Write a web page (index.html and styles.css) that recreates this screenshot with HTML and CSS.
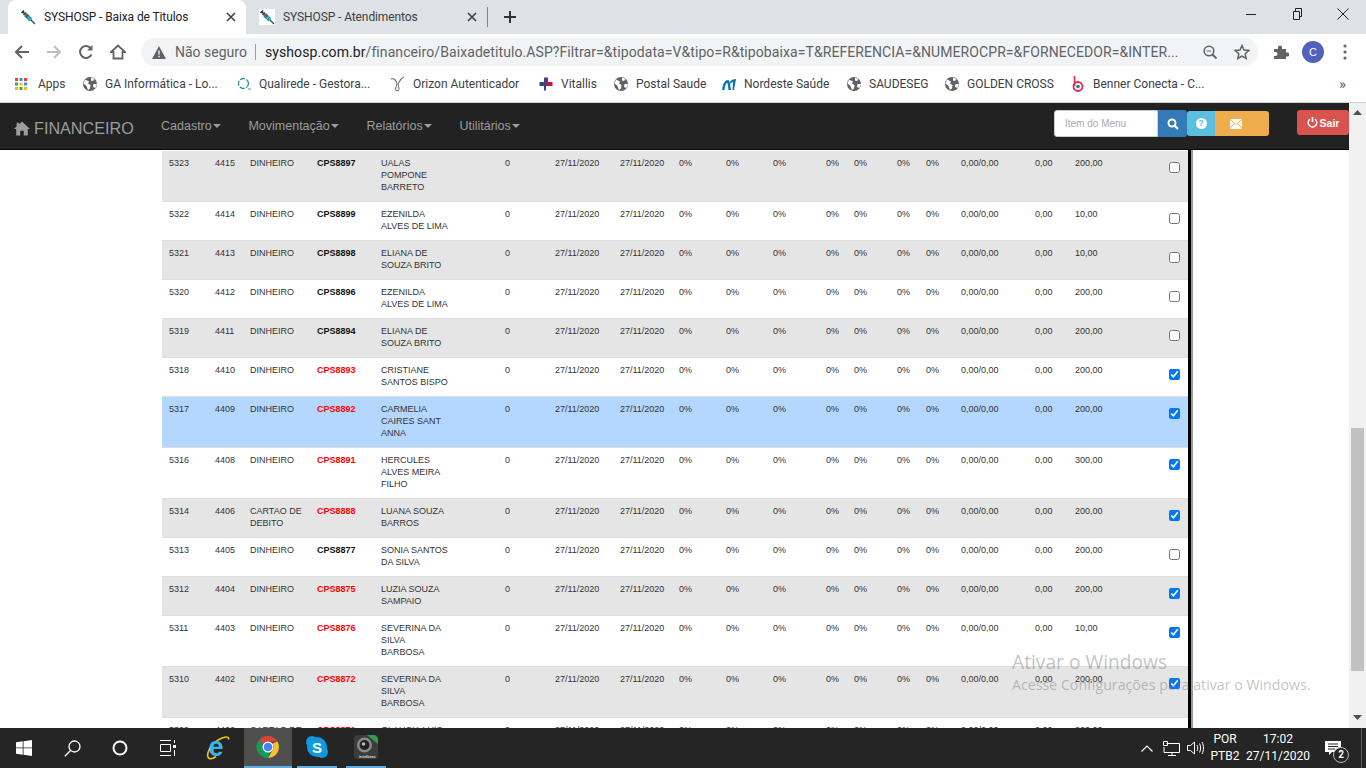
FILE: index.html
```html
<!DOCTYPE html>
<html lang="pt-BR">
<head>
    <meta charset="UTF-8">
    <title>SYSHOSP - Baixa de Titulos</title>
    <link rel="stylesheet" href="styles.css">
</head>
<body>
    <svg class="defs" width="0" height="0">
        <symbol id="globe" viewBox="0 0 16 16">
            <circle cx="8" cy="8" r="7" fill="#5f6368"/>
            <path d="M3 3.500 7 5.500 6 7.500 8.500 9 8 12.500 6 14 4.500 10 1.500 7.500ZM9 1.500 12.500 3 11 5 9 4.500ZM11.500 8 15 8 13.500 12 11 11Z" fill="#fff"/>
        </symbol>
        <symbol id="syringe" viewBox="0 0 16 16">
            <path d="M1.500 4 4 1.500M2.800 2.800 5.500 5.500" stroke="#2d2d2d" stroke-width="1.500" fill="none"/>
            <path d="M6 3.500 3.500 6" stroke="#444" stroke-width="1.500"/>
            <path d="M5.500 5.500 10.800 10.800" stroke="#3c6d7a" stroke-width="4"/>
            <path d="M8 8 10.800 10.800" stroke="#27b3c9" stroke-width="3"/>
            <path d="M10.800 10.800 15 15" stroke="#2f4f4f" stroke-width="1.300"/>
        </symbol>
    </svg>

    <!-- TABS -->
    <div class="tabbar">
        <div class="tab tab-active">
            <svg class="favicon"><use href="#syringe"/></svg>
            <span class="tab-title">SYSHOSP - Baixa de Titulos</span>
            <svg class="tab-close" viewBox="0 0 10 10"><path d="M1 1 9 9M9 1 1 9" stroke="#3c4043" stroke-width="1.600"/></svg>
        </div>
        <div class="tab">
            <svg class="favicon favicon-boxed"><use href="#syringe"/></svg>
            <span class="tab-title">SYSHOSP - Atendimentos</span>
            <svg class="tab-close" viewBox="0 0 10 10"><path d="M1 1 9 9M9 1 1 9" stroke="#3c4043" stroke-width="1.600"/></svg>
        </div>
        <span class="tab-sep"></span>
        <svg class="tab-new" width="12" height="12" viewBox="0 0 12 12"><path d="M6 0V12M0 6H12" stroke="#333" stroke-width="2"/></svg>
        <div class="win-controls">
            <svg width="12" height="12" viewBox="0 0 12 12"><path d="M1 6.500H11" stroke="#222"/></svg>
            <svg width="12" height="12" viewBox="0 0 12 12"><path d="M2.500 3.500H8.500V11.500H2.500ZM4.500 3.500V.5H10.500V8.500H8.500" fill="none" stroke="#222"/></svg>
            <svg width="12" height="12" viewBox="0 0 12 12"><path d="M.5 .5 11.500 11.500M11.500 .5 .5 11.500" stroke="#222"/></svg>
        </div>
    </div>

    <!-- ADDRESS BAR -->
    <div class="toolbar">
        <svg class="nav-icon" viewBox="0 0 16 16"><path d="M15 8H2M8 2 2 8 8 14" fill="none" stroke="#5f6368" stroke-width="2"/></svg>
        <svg class="nav-icon" viewBox="0 0 16 16"><path d="M1 8H14M8 2 14 8 8 14" fill="none" stroke="#bdc1c6" stroke-width="2"/></svg>
        <svg class="nav-icon" viewBox="0 0 16 16"><path d="M13.500 10.500A6 6 0 1 1 13 4.500" fill="none" stroke="#5f6368" stroke-width="2"/><path d="M14.500 1V6.500H9Z" fill="#5f6368"/></svg>
        <svg class="nav-icon" viewBox="0 0 16 16"><path d="M8 1.500 1 8H3.500V14.500H12.500V8H15Z" fill="none" stroke="#5f6368" stroke-width="1.800"/></svg>
        <div class="omnibox">
            <svg class="warn" width="14" height="13" viewBox="0 0 14 13"><path d="M7 0 14 13H0Z" fill="#5f6368"/><path d="M7 4.500V8.500M7 9.800V11.300" stroke="#f1f3f4" stroke-width="1.400"/></svg>
            <span class="not-secure">Não seguro</span>
            <span class="omni-sep"></span>
            <span class="url"><b>syshosp.com.br</b>/financeiro/Baixadetitulo.ASP?Filtrar=&amp;tipodata=V&amp;tipo=R&amp;tipobaixa=T&amp;REFERENCIA=&amp;NUMEROCPR=&amp;FORNECEDOR=&amp;INTER...</span>
            <svg class="omni-icon" viewBox="0 0 16 16"><circle cx="7" cy="7" r="4.800" fill="none" stroke="#5f6368" stroke-width="1.500"/><path d="M10.500 10.500 14.500 14.500" stroke="#5f6368" stroke-width="1.800"/><path d="M4.800 7H9.200" stroke="#5f6368"/></svg>
            <svg class="omni-icon omni-star" viewBox="0 0 16 16"><path d="M8 1.500 10 6 14.800 6.500 11.200 9.800 12.200 14.500 8 12 3.800 14.500 4.800 9.800 1.200 6.500 6 6Z" fill="none" stroke="#5f6368" stroke-width="1.500"/></svg>
        </div>
        <svg class="ext-icon" viewBox="0 0 16 16"><path d="M1 5H5V3.500A2 2 0 0 1 9 3.500V5H13V8.500H14.500A2 2 0 0 1 14.500 12.500H13V15H1V12H2.500A2 2 0 0 0 2.500 8H1Z" fill="#5f6368"/></svg>
        <span class="avatar">C</span>
        <svg class="kebab" width="4" height="16" viewBox="0 0 4 16"><circle cx="2" cy="2" r="1.600" fill="#5f6368"/><circle cx="2" cy="8" r="1.600" fill="#5f6368"/><circle cx="2" cy="14" r="1.600" fill="#5f6368"/></svg>
    </div>

    <!-- BOOKMARKS -->
    <div class="bookmarks">
        <div class="bm">
            <svg class="bm-icon bm-apps" viewBox="0 0 12 12">
                <path d="M0 0H3V3H0Z" fill="#ea4335"/><path d="M4.500 0H7.500V3H4.500Z" fill="#4285f4"/><path d="M9 0H12V3H9Z" fill="#ea4335"/>
                <path d="M0 4.500H3V7.500H0Z" fill="#34a853"/><path d="M4.500 4.500H7.500V7.500H4.500Z" fill="#fbbc05"/><path d="M9 4.500H12V7.500H9Z" fill="#4285f4"/>
                <path d="M0 9H3V12H0Z" fill="#fbbc05"/><path d="M4.500 9H7.500V12H4.500Z" fill="#34a853"/><path d="M9 9H12V12H9Z" fill="#fbbc05"/>
            </svg>Apps
        </div>
        <div class="bm"><svg class="bm-icon"><use href="#globe"/></svg>GA Informática - Lo...</div>
        <div class="bm">
            <svg class="bm-icon" viewBox="0 0 16 16"><circle cx="7.500" cy="7.500" r="5" fill="none" stroke="#2f8f9d" stroke-width="1.300" stroke-dasharray="5 1.500"/><path d="M12 13H15" stroke="#3a9a6c"/></svg>Qualirede - Gestora...
        </div>
        <div class="bm">
            <svg class="bm-icon" viewBox="0 0 16 16"><path d="M1 3C3 2 5 3 6.500 6 8 9 6 11 5.500 13 5.500 15.500 9 15.500 9 13 9 10 7 9 9 6 10 4 12 2 14 .8" fill="none" stroke="#777" stroke-width="1.100"/></svg>Orizon Autenticador
        </div>
        <div class="bm">
            <svg class="bm-icon" viewBox="0 0 16 16"><path d="M6 1.500H8V14.500H6V10H1.500V6H6Z" fill="#1f4f8f"/><path d="M8 1.500H10V6H14.500V10H8Z" fill="#b01c4a"/></svg>Vitallis
        </div>
        <div class="bm"><svg class="bm-icon"><use href="#globe"/></svg>Postal Saude</div>
        <div class="bm">
            <svg class="bm-icon" viewBox="0 0 16 16"><path d="M1 14C2 7 4 4 7 4 9 4 9 8 10 14H7.500C7 10 7 7 6 7 5 7 4 10 3.500 14ZM9 6C10 4 12 3 15 3L13 14H11.500L12 6C11 6 10 7 9.500 8Z" fill="#0a74b5"/></svg>Nordeste Saúde
        </div>
        <div class="bm"><svg class="bm-icon"><use href="#globe"/></svg>SAUDESEG</div>
        <div class="bm"><svg class="bm-icon"><use href="#globe"/></svg>GOLDEN CROSS</div>
        <div class="bm">
            <svg class="bm-icon" viewBox="0 0 16 16"><path d="M4.500 0V10" stroke="#e8294c" stroke-width="1.600"/><circle cx="8" cy="10.500" r="4.500" fill="none" stroke="#e8294c" stroke-width="1.800"/><circle cx="8" cy="10.500" r="1.800" fill="#1d6fb8"/></svg>Benner Conecta - C...
        </div>
        <div class="bm bm-more">»</div>
    </div>

    <!-- PAGE -->
    <div class="page">
        <div class="page-content">
            <nav class="navbar">
                <a class="brand">
                    <svg width="16" height="15" viewBox="0 0 18 16"><path d="M9 0 18 8.500H15.500V16H11V10.500H7V16H2.500V8.500H0L3 5.600V1.500H5.500V3.300Z" fill="#9d9d9d"/></svg>
                    FINANCEIRO
                </a>
                <ul class="menu">
                    <li>Cadastro<i class="caret"></i></li>
                    <li>Movimentação<i class="caret"></i></li>
                    <li>Relatórios<i class="caret"></i></li>
                    <li>Utilitários<i class="caret"></i></li>
                </ul>
                <div class="nav-search">
                    <input class="search-input" type="text" placeholder="Item do Menu">
                    <button class="btn btn-search">
                        <svg width="12" height="12" viewBox="0 0 12 12"><circle cx="5" cy="5" r="3.500" fill="none" stroke="#fff" stroke-width="2"/><path d="M7.500 7.500 11 11" stroke="#fff" stroke-width="2.200"/></svg>
                    </button>
                    <button class="btn btn-help"><span class="help-dot">?</span></button>
                    <button class="btn btn-mail">
                        <svg width="12" height="10" viewBox="0 0 12 10"><path d="M0 0H12V10H0Z" fill="#fff"/><path d="M0 .5 6 5.500 12 .5M0 9.500 4 4.500M12 9.500 8 4.500" fill="none" stroke="#f0ad4e"/></svg>
                    </button>
                </div>
                <button class="btn btn-exit">
                    <svg width="11" height="11" viewBox="0 0 11 11"><path d="M3 2.200A4.300 4.300 0 1 0 8 2.200" fill="none" stroke="#fff" stroke-width="1.500"/><path d="M5.500 0V5" stroke="#fff" stroke-width="1.600"/></svg>
                    Sair
                </button>
            </nav>

            <div class="list-wrap">
                <table class="titles">
                    <colgroup>
                        <col class="c46"><col class="c35"><col class="c67"><col class="c64"><col class="c124"><col class="c50">
                        <col class="c65"><col class="c59"><col class="c47"><col class="c47"><col class="c53"><col class="c28">
                        <col class="c43"><col class="c29"><col class="c35"><col class="c74"><col class="c40"><col class="c101"><col class="c20">
                    </colgroup>
                    <tbody>
                        <tr class="grey"><td>5323</td><td>4415</td><td>DINHEIRO</td><td class="code">CPS8897</td><td class="name">UALAS POMPONE BARRETO</td><td>0</td><td>27/11/2020</td><td>27/11/2020</td><td>0%</td><td>0%</td><td>0%</td><td>0%</td><td>0%</td><td>0%</td><td>0%</td><td>0,00/0,00</td><td>0,00</td><td>200,00</td><td class="check"><input type="checkbox"></td></tr>
                        <tr><td>5322</td><td>4414</td><td>DINHEIRO</td><td class="code">CPS8899</td><td class="name">EZENILDA ALVES DE LIMA</td><td>0</td><td>27/11/2020</td><td>27/11/2020</td><td>0%</td><td>0%</td><td>0%</td><td>0%</td><td>0%</td><td>0%</td><td>0%</td><td>0,00/0,00</td><td>0,00</td><td>10,00</td><td class="check"><input type="checkbox"></td></tr>
                        <tr class="grey"><td>5321</td><td>4413</td><td>DINHEIRO</td><td class="code">CPS8898</td><td class="name">ELIANA DE SOUZA BRITO</td><td>0</td><td>27/11/2020</td><td>27/11/2020</td><td>0%</td><td>0%</td><td>0%</td><td>0%</td><td>0%</td><td>0%</td><td>0%</td><td>0,00/0,00</td><td>0,00</td><td>10,00</td><td class="check"><input type="checkbox"></td></tr>
                        <tr><td>5320</td><td>4412</td><td>DINHEIRO</td><td class="code">CPS8896</td><td class="name">EZENILDA ALVES DE LIMA</td><td>0</td><td>27/11/2020</td><td>27/11/2020</td><td>0%</td><td>0%</td><td>0%</td><td>0%</td><td>0%</td><td>0%</td><td>0%</td><td>0,00/0,00</td><td>0,00</td><td>200,00</td><td class="check"><input type="checkbox"></td></tr>
                        <tr class="grey"><td>5319</td><td>4411</td><td>DINHEIRO</td><td class="code">CPS8894</td><td class="name">ELIANA DE SOUZA BRITO</td><td>0</td><td>27/11/2020</td><td>27/11/2020</td><td>0%</td><td>0%</td><td>0%</td><td>0%</td><td>0%</td><td>0%</td><td>0%</td><td>0,00/0,00</td><td>0,00</td><td>200,00</td><td class="check"><input type="checkbox"></td></tr>
                        <tr><td>5318</td><td>4410</td><td>DINHEIRO</td><td class="code paid">CPS8893</td><td class="name">CRISTIANE SANTOS BISPO</td><td>0</td><td>27/11/2020</td><td>27/11/2020</td><td>0%</td><td>0%</td><td>0%</td><td>0%</td><td>0%</td><td>0%</td><td>0%</td><td>0,00/0,00</td><td>0,00</td><td>200,00</td><td class="check"><input type="checkbox" checked></td></tr>
                        <tr class="picked"><td>5317</td><td>4409</td><td>DINHEIRO</td><td class="code paid">CPS8892</td><td class="name">CARMELIA CAIRES SANT ANNA</td><td>0</td><td>27/11/2020</td><td>27/11/2020</td><td>0%</td><td>0%</td><td>0%</td><td>0%</td><td>0%</td><td>0%</td><td>0%</td><td>0,00/0,00</td><td>0,00</td><td>200,00</td><td class="check"><input type="checkbox" checked></td></tr>
                        <tr><td>5316</td><td>4408</td><td>DINHEIRO</td><td class="code paid">CPS8891</td><td class="name">HERCULES ALVES MEIRA FILHO</td><td>0</td><td>27/11/2020</td><td>27/11/2020</td><td>0%</td><td>0%</td><td>0%</td><td>0%</td><td>0%</td><td>0%</td><td>0%</td><td>0,00/0,00</td><td>0,00</td><td>300,00</td><td class="check"><input type="checkbox" checked></td></tr>
                        <tr class="grey"><td>5314</td><td>4406</td><td>CARTAO DE DEBITO</td><td class="code paid">CPS8888</td><td class="name">LUANA SOUZA BARROS</td><td>0</td><td>27/11/2020</td><td>27/11/2020</td><td>0%</td><td>0%</td><td>0%</td><td>0%</td><td>0%</td><td>0%</td><td>0%</td><td>0,00/0,00</td><td>0,00</td><td>200,00</td><td class="check"><input type="checkbox" checked></td></tr>
                        <tr><td>5313</td><td>4405</td><td>DINHEIRO</td><td class="code">CPS8877</td><td class="name">SONIA SANTOS DA SILVA</td><td>0</td><td>27/11/2020</td><td>27/11/2020</td><td>0%</td><td>0%</td><td>0%</td><td>0%</td><td>0%</td><td>0%</td><td>0%</td><td>0,00/0,00</td><td>0,00</td><td>200,00</td><td class="check"><input type="checkbox"></td></tr>
                        <tr class="grey"><td>5312</td><td>4404</td><td>DINHEIRO</td><td class="code paid">CPS8875</td><td class="name">LUZIA SOUZA SAMPAIO</td><td>0</td><td>27/11/2020</td><td>27/11/2020</td><td>0%</td><td>0%</td><td>0%</td><td>0%</td><td>0%</td><td>0%</td><td>0%</td><td>0,00/0,00</td><td>0,00</td><td>200,00</td><td class="check"><input type="checkbox" checked></td></tr>
                        <tr><td>5311</td><td>4403</td><td>DINHEIRO</td><td class="code paid">CPS8876</td><td class="name">SEVERINA DA SILVA BARBOSA</td><td>0</td><td>27/11/2020</td><td>27/11/2020</td><td>0%</td><td>0%</td><td>0%</td><td>0%</td><td>0%</td><td>0%</td><td>0%</td><td>0,00/0,00</td><td>0,00</td><td>10,00</td><td class="check"><input type="checkbox" checked></td></tr>
                        <tr class="grey"><td>5310</td><td>4402</td><td>DINHEIRO</td><td class="code paid">CPS8872</td><td class="name">SEVERINA DA SILVA BARBOSA</td><td>0</td><td>27/11/2020</td><td>27/11/2020</td><td>0%</td><td>0%</td><td>0%</td><td>0%</td><td>0%</td><td>0%</td><td>0%</td><td>0,00/0,00</td><td>0,00</td><td>200,00</td><td class="check"><input type="checkbox" checked></td></tr>
                        <tr><td>5309</td><td>4400</td><td>CARTAO DE DEBITO</td><td class="code paid">CPS8871</td><td class="name">GLAUCIA LUIS SANTOS</td><td>0</td><td>27/11/2020</td><td>27/11/2020</td><td>0%</td><td>0%</td><td>0%</td><td>0%</td><td>0%</td><td>0%</td><td>0%</td><td>0,00/0,00</td><td>0,00</td><td>200,00</td><td class="check"><input type="checkbox" checked></td></tr>
                    </tbody>
                </table>
            </div>
        </div>

        <div class="scrollbar">
            <svg width="9" height="5" viewBox="0 0 9 5"><path d="M4.500 0 9 5H0Z" fill="#505050"/></svg>
            <div class="scroll-track"><div class="scroll-thumb"></div></div>
            <svg width="9" height="5" viewBox="0 0 9 5"><path d="M0 0H9L4.500 5Z" fill="#505050"/></svg>
        </div>

        <!-- WINDOWS WATERMARK -->
        <div class="activate">
            <div class="activate-title">Ativar o Windows</div>
            <div class="activate-sub">Acesse Configurações para ativar o Windows.</div>
        </div>
    </div>

    <!-- TASKBAR -->
    <div class="taskbar">
        <div class="task-slot">
            <svg width="16" height="16" viewBox="0 0 16 16"><path d="M0 2.300 6.700 1.300V7.500H0ZM7.500 1.200 16 0V7.500H7.500ZM0 8.300H6.700V14.700L0 13.700ZM7.500 8.300H16V16L7.500 14.800Z" fill="#fff"/></svg>
        </div>
        <div class="task-slot">
            <svg width="17" height="17" viewBox="0 0 17 17"><circle cx="10.500" cy="6.500" r="5.500" fill="none" stroke="#fff" stroke-width="1.300"/><path d="M6.500 10.500 .8 16.200" stroke="#fff" stroke-width="1.300"/></svg>
        </div>
        <div class="task-slot">
            <svg width="16" height="16" viewBox="0 0 16 16"><circle cx="8" cy="8" r="6.500" fill="none" stroke="#fff" stroke-width="2"/></svg>
        </div>
        <div class="task-slot">
            <svg width="16" height="16" viewBox="0 0 16 16"><path d="M0 .5H11M0 15.500H11M.5 4.500H10.500V11.500H.5Z" fill="none" stroke="#fff"/><path d="M13 5H16V8H13Z" fill="#fff"/><path d="M14.500 0V3M14.500 10V16" stroke="#fff"/></svg>
        </div>
        <div class="task-app task-ie">
            <svg width="24" height="24" viewBox="0 0 24 24">
                <path d="M2.500 22C-.5 18 5 8 13 3.500 18 .5 23.500 0 22.500 3.500M2.500 22C4.500 23.500 8 22 10 20.500" fill="none" stroke="#f2c316" stroke-width="1.600"/>
                <text class="ie-letter" x="2.500" y="20">e</text>
            </svg>
        </div>
        <div class="task-app task-running task-active">
            <svg width="24" height="24" viewBox="0 0 24 24">
                <path d="M12 1A11 11 0 0 1 21.500 6.500H12A5.500 5.500 0 0 0 7 9.500L3.500 4.500A11 11 0 0 1 12 1Z" fill="#db4437"/>
                <path d="M21.500 6.500A11 11 0 0 1 12 23L16.800 14.800A5.500 5.500 0 0 0 16.500 8.500Z" fill="#fbc02d"/>
                <path d="M3.500 4.500 7.500 12A5.500 5.500 0 0 0 14 17L12 23A11 11 0 0 1 3.500 4.500Z" fill="#0f9d58"/>
                <circle cx="12" cy="12" r="5.500" fill="#fff"/><circle cx="12" cy="12" r="4.300" fill="#4285f4"/>
            </svg>
        </div>
        <div class="task-app task-running task-skype">
            <svg width="24" height="24" viewBox="0 0 24 24"><circle cx="7" cy="7" r="6" fill="#0f9ae0"/><circle cx="17" cy="17" r="6" fill="#0f9ae0"/><circle cx="12" cy="12" r="10" fill="#0f9ae0"/><text class="skype-letter" x="7" y="18">S</text></svg>
        </div>
        <div class="task-app task-running task-cam">
            <svg width="24" height="24" viewBox="0 0 24 24"><rect width="24" height="24" rx="3" fill="#3c3c3c"/><path d="M13 0H21L24 3V9Z" fill="#2f9e4f"/><circle cx="10.500" cy="10" r="7.500" fill="#8a8a8a"/><circle cx="10.500" cy="10" r="5" fill="#222"/><circle cx="9.500" cy="9" r="1.800" fill="#bbb"/><text class="cam-label" x="5" y="22.500">intelbras</text></svg>
        </div>
        <div class="tray">
            <svg width="12" height="7" viewBox="0 0 12 7"><path d="M.5 6.500 6 1 11.500 6.500" fill="none" stroke="#fff" stroke-width="1.200"/></svg>
            <svg class="tray-net" width="17" height="15" viewBox="0 0 17 15"><path d="M3.500 2.500H16.500V11.500H1V6M9 11.500V14.500M5 14.500H13" fill="none" stroke="#fff"/><path d="M.5 .5H4.500V4.500H.5Z" fill="none" stroke="#fff"/></svg>
            <svg class="tray-vol" width="17" height="14" viewBox="0 0 17 14"><path d="M.5 4.500H3.500L7.500 1V13L3.500 9.500H.5Z" fill="none" stroke="#fff"/><path d="M10 4C11 6 11 8 10 10M12.500 2.500C14 5.500 14 8.500 12.500 11.500M15 1C17 5 17 9 15 13" fill="none" stroke="#fff"/></svg>
            <div class="tray-lang"><span>POR</span><span>PTB2</span></div>
            <div class="tray-clock"><span>17:02</span><span>27/11/2020</span></div>
            <div class="tray-note">
                <svg width="16" height="15" viewBox="0 0 16 15"><path d="M0 0H16V11H7L4 14V11H0Z" fill="#fff"/><path d="M3 3H13M3 5.500H13M3 8H10" stroke="#252525"/></svg>
                <span class="note-badge">2</span>
            </div>
            <span class="tray-edge"></span>
        </div>
    </div>
</body>
</html>
```

FILE: styles.css
```css
/* General */
html, body {
    margin: 0;
    height: 100%;
    overflow: hidden;
}

body {
    display: flex;
    flex-direction: column;
    height: 768px;
    font-family: 'Liberation Sans', Arial, sans-serif;
    background: #fff;
}

.defs {
    position: absolute;
}

/* Tabs */
.tabbar {
    height: 34px;
    flex: none;
    display: flex;
    align-items: center;
    padding-left: 8px;
    background: #dee1e6;
    font-family: Roboto, sans-serif;
    font-size: 12px;
    letter-spacing: -0.1px;
    color: #3c4043;
}

.tab {
    width: 241px;
    height: 34px;
    box-sizing: border-box;
    padding-left: 13px;
    display: flex;
    align-items: center;
    gap: 8px;
}

.tab-active {
    width: 238px;
    padding-left: 12px;
    background: #fff;
    border-radius: 8px 8px 0 0;
    color: #202124;
}

.favicon {
    width: 16px;
    height: 16px;
    flex: none;
}

.favicon-boxed {
    background: #fff;
}

.tab-title {
    flex: 1;
}

.tab-close {
    width: 10px;
    height: 10px;
    flex: none;
    margin-right: 10px;
}

.tab-sep {
    width: 1px;
    height: 20px;
    background: #80868b;
}

.tab-new {
    margin-left: 16px;
}

.win-controls {
    margin-left: auto;
    display: flex;
    gap: 34px;
    padding: 0 17px 6px 0;
}

/* Address bar */
.toolbar {
    height: 34px;
    flex: none;
    display: flex;
    align-items: center;
    padding: 2px 0 0 14px;
    box-sizing: border-box;
    background: #fff;
}

.nav-icon {
    width: 16px;
    height: 16px;
    margin-right: 16px;
}

.omnibox {
    width: 1117px;
    height: 28px;
    margin-left: -1px;
    box-sizing: border-box;
    padding-left: 11px;
    display: flex;
    align-items: center;
    background: #f1f3f4;
    border-radius: 14px;
    font-family: Roboto, sans-serif;
    font-size: 14px;
    color: #5f6368;
}

.warn {
    flex: none;
}

.not-secure {
    margin-left: 9px;
    width: 71px;
    white-space: nowrap;
}

.omni-sep {
    width: 1px;
    height: 16px;
    background: #9aa0a6;
    margin: 0 9px;
}

.url {
    width: 915px;
    flex: none;
    white-space: nowrap;
    overflow: hidden;
    letter-spacing: 0.08px;
}

.url b {
    font-weight: normal;
    color: #202124;
}

.omni-icon {
    width: 16px;
    height: 16px;
    flex: none;
    margin-left: 22px;
}

.omni-star {
    margin-left: 16px;
}

.ext-icon {
    width: 16px;
    height: 16px;
    margin-left: 15px;
}

.avatar {
    width: 22px;
    height: 22px;
    margin-left: 13px;
    border-radius: 50%;
    background: #5261bd;
    color: #fff;
    font-size: 11px;
    line-height: 22px;
    text-align: center;
}

.kebab {
    margin-left: 19px;
}

/* Bookmarks */
.bookmarks {
    height: 35px;
    flex: none;
    display: grid;
    grid-template-columns: 67px 154px 154px 148px 75px 108px 125px 98px 126px 265px 31px;
    align-items: center;
    padding: 0 0 2px 15px;
    box-sizing: border-box;
    border-bottom: 1px solid #d0d0d0;
    font-family: Roboto, sans-serif;
    font-size: 12px;
    color: #3c4043;
}

.bm {
    display: flex;
    align-items: center;
    gap: 7px;
    white-space: nowrap;
}

.bm-icon {
    width: 16px;
    height: 16px;
    flex: none;
}

.bm-apps {
    width: 12px;
    height: 12px;
    margin-right: 4px;
}

.bm-more {
    padding-left: 4px;
    font-size: 15px;
    color: #5f6368;
}

/* Site page */
.page {
    position: relative;
    flex: 1;
    min-height: 0;
    display: flex;
}

.page-content {
    flex: 1;
    min-width: 0;
    display: flex;
    flex-direction: column;
}

.navbar {
    height: 46px;
    flex: none;
    display: flex;
    align-items: flex-start;
    background: #222;
    border-bottom: 1px solid #080808;
}

.brand {
    display: flex;
    align-items: center;
    gap: 4px;
    height: 46px;
    margin: 2px 0 0 14px;
    width: 147px;
    font-size: 16.2px;
    color: #9d9d9d;
}

.menu {
    display: flex;
    gap: 27.7px;
    margin: 0;
    padding: 0;
    list-style: none;
    font-size: 12.5px;
    line-height: 46px;
    color: #9d9d9d;
}

.caret {
    display: inline-block;
    margin-left: 1px;
    vertical-align: 2px;
    border-top: 4px solid #9d9d9d;
    border-left: 4px solid transparent;
    border-right: 4px solid transparent;
}

.nav-search {
    margin-left: auto;
    display: flex;
    margin-top: 7px;
}

.search-input {
    width: 104px;
    height: 27px;
    box-sizing: border-box;
    padding: 0 10px;
    border: 1px solid #ccc;
    border-radius: 3px 0 0 3px;
    font-family: 'Liberation Sans', Arial, sans-serif;
    font-size: 10px;
}

.search-input::placeholder {
    color: #aaa;
}

.btn {
    border: none;
    padding: 0;
    display: flex;
    align-items: center;
    justify-content: center;
    color: #fff;
}

.btn-search {
    width: 29px;
    height: 27px;
    background: #337ab7;
    border-radius: 0 3px 3px 0;
}

.btn-help {
    width: 28px;
    height: 25px;
    margin-top: 1px;
    background: #5bc0de;
    border-radius: 3px 0 0 3px;
}

.help-dot {
    width: 11px;
    height: 11px;
    border-radius: 50%;
    background: #fff;
    color: #5bc0de;
    font-size: 9px;
    font-weight: bold;
    line-height: 11px;
}

.btn-mail {
    width: 54px;
    height: 25px;
    margin-top: 1px;
    padding-right: 12px;
    box-sizing: border-box;
    background: #f0ad4e;
    border-radius: 0 3px 3px 0;
}

.btn-exit {
    width: 52px;
    height: 25px;
    margin: 7px 0 0 28px;
    gap: 2px;
    background: #d9534f;
    border-radius: 3px;
    font-family: 'Liberation Sans', Arial, sans-serif;
    font-size: 10.5px;
    font-weight: bold;
}

/* Titles list */
.list-wrap {
    position: relative;
    flex: 1;
    min-height: 0;
    overflow: hidden;
    padding-top: 1px;
}

.list-wrap::after {
    content: "";
    position: absolute;
    top: 0;
    bottom: 0;
    left: 1188px;
    width: 3px;
    background: #000;
    border-right: 2px solid #999;
}

.titles {
    width: 1027px;
    margin-left: 162px;
    table-layout: fixed;
    border-collapse: separate;
    border-spacing: 0;
    font-size: 9px;
    line-height: 12px;
    color: #333;
}

.c46 { width: 46px; }
.c35 { width: 35px; }
.c67 { width: 67px; }
.c64 { width: 64px; }
.c124 { width: 124px; }
.c50 { width: 50px; }
.c65 { width: 65px; }
.c59 { width: 59px; }
.c47 { width: 47px; }
.c53 { width: 53px; }
.c28 { width: 28px; }
.c43 { width: 43px; }
.c29 { width: 29px; }
.c74 { width: 74px; }
.c40 { width: 40px; }
.c101 { width: 101px; }
.c20 { width: 20px; }

.titles td {
    padding: 6px 0 8px 7px;
    vertical-align: top;
    border-bottom: 1px solid #dedede;
}

.titles .name {
    padding-right: 48px;
}

.titles .code {
    font-weight: bold;
    color: #111;
}

.titles .paid {
    color: #f00;
}

.titles .check {
    padding: 11px 0 0 0;
}

.check input {
    width: 11px;
    height: 11px;
    margin: 0;
    display: block;
}

tr.grey td {
    background: #e5e5e5;
}

tr.picked td {
    background: #b3d7ff;
}

/* Page scrollbar */
.scrollbar {
    width: 17px;
    flex: none;
    display: flex;
    flex-direction: column;
    align-items: center;
    gap: 6px;
    padding: 7px 0 8px;
    box-sizing: border-box;
    background: #f1f1f1;
}

.scroll-track {
    flex: 1;
    width: 100%;
    padding-top: 307px;
    box-sizing: border-box;
    display: flex;
    justify-content: center;
}

.scroll-thumb {
    width: 13px;
    height: 243px;
    background: #c1c1c1;
}

/* Windows watermark */
.activate {
    position: absolute;
    left: 1012px;
    top: 546px;
    font-family: 'Open Sans', sans-serif;
    color: rgba(110, 110, 110, 0.42);
    pointer-events: none;
    white-space: nowrap;
}

.activate-title {
    font-size: 19.2px;
    line-height: 26px;
}

.activate-sub {
    font-size: 14.2px;
    line-height: 20px;
}

/* Taskbar */
.taskbar {
    height: 40px;
    flex: none;
    display: flex;
    align-items: center;
    background: #252525;
    color: #fff;
}

.task-slot {
    width: 48px;
    flex: none;
    display: flex;
    justify-content: center;
}

.task-app {
    height: 40px;
    box-sizing: border-box;
    display: flex;
    align-items: center;
    justify-content: center;
    flex: none;
}

.task-ie {
    width: 52px;
}

.task-running {
    border-bottom: 2px solid #63ade6;
}

.task-active {
    width: 48px;
    background: #4f4f4e;
}

.task-skype {
    width: 40px;
    margin-left: 5px;
}

.task-cam {
    width: 40px;
    margin-left: 9px;
}

.ie-letter {
    font-family: 'Liberation Sans', sans-serif;
    font-size: 27px;
    font-weight: bold;
    fill: #3ab5ec;
}

.skype-letter {
    font-family: 'Liberation Sans', sans-serif;
    font-size: 15px;
    font-weight: bold;
    fill: #fff;
}

.cam-label {
    font-family: 'Liberation Sans', sans-serif;
    font-size: 4px;
    font-weight: bold;
    fill: #ddd;
}

.tray {
    margin-left: auto;
    display: flex;
    align-items: center;
    font-family: Roboto, sans-serif;
    font-size: 12px;
}

.tray-net {
    margin-left: 10px;
}

.tray-vol {
    margin-left: 7px;
}

.tray-lang, .tray-clock {
    display: flex;
    flex-direction: column;
    align-items: center;
    line-height: 17px;
}

.tray-lang {
    width: 26px;
    margin-left: 8px;
}

.tray-clock {
    width: 58px;
    margin-left: 11px;
}

.tray-note {
    position: relative;
    margin-left: 18px;
    display: flex;
}

.note-badge {
    position: absolute;
    left: 8px;
    top: 6px;
    width: 14px;
    height: 14px;
    border: 1px solid #bbb;
    border-radius: 50%;
    background: #252525;
    font-size: 10px;
    font-weight: bold;
    line-height: 14px;
    text-align: center;
}

.tray-edge {
    width: 1px;
    height: 40px;
    margin: 0 4px 0 20px;
    background: #5a5a5a;
}
```
